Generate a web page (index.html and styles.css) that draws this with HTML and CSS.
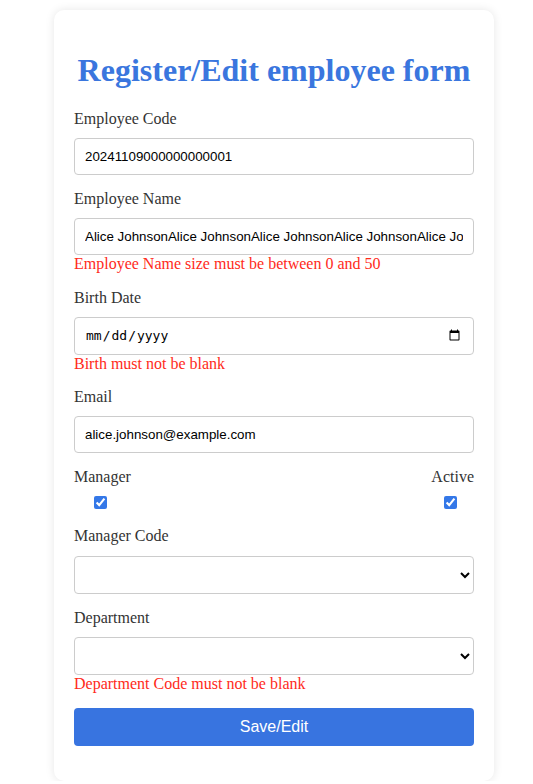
FILE: index.html
```html
<!DOCTYPE html>
<html>
<head>
<meta charset="utf-8">
<link rel="stylesheet" href="styles.css">
</head>
<body>
<div class="card">
  <h1 class="title">Register/Edit employee form</h1>
  <form class="form">
    <div class="group">
      <label class="label">Employee Code</label>
      <input class="field" type="text" value="20241109000000000001">
    </div>
    <div class="group">
      <label class="label">Employee Name</label>
      <input class="field" type="text" value="Alice JohnsonAlice JohnsonAlice JohnsonAlice JohnsonAlice Johnson">
      <div class="error">Employee Name size must be between 0 and 50</div>
    </div>
    <div class="group">
      <label class="label">Birth Date</label>
      <input class="field" type="date">
      <div class="error">Birth must not be blank</div>
    </div>
    <div class="group">
      <label class="label">Email</label>
      <input class="field" type="text" value="alice.johnson@example.com">
    </div>
    <div class="group checks">
      <div class="check">
        <label class="label">Manager</label>
        <input class="box" type="checkbox" checked>
      </div>
      <div class="check">
        <label class="label">Active</label>
        <input class="box" type="checkbox" checked>
      </div>
    </div>
    <div class="group">
      <label class="label">Manager Code</label>
      <select class="field"><option></option></select>
    </div>
    <div class="group">
      <label class="label">Department</label>
      <select class="field"><option></option></select>
      <div class="error">Department Code must not be blank</div>
    </div>
    <div class="group">
      <button class="btn" type="button">Save/Edit</button>
    </div>
  </form>
</div>
</body>
</html>
```

FILE: styles.css
```css
html, body {
  margin: 0;
  padding: 0;
  background: #ffffff;
}
body {
  font-family: "Liberation Serif", "Times New Roman", serif;
  font-size: 16px;
  color: #333333;
}
.card {
  width: 400px;
  margin: 10px 0 0 54px;
  padding: 20px;
  background: #ffffff;
  border-radius: 10px;
  box-shadow: 0 0 10px rgba(0, 0, 0, 0.1);
}
.title {
  margin: 22px 0 21px;
  font-size: 32px;
  font-weight: bold;
  color: #3a76de;
  text-align: center;
  line-height: 37px;
}
.form {
  margin: 0;
}
.group {
  margin-bottom: 15px;
}
.label {
  display: block;
  line-height: 18.2px;
  margin-bottom: 10px;
}
.field {
  display: block;
  box-sizing: border-box;
  width: 100%;
  padding: 10px;
  border: 1px solid #cccccc;
  border-radius: 4px;
  background: #ffffff;
  font-family: "Liberation Sans", Arial, sans-serif;
  font-size: 13.33px;
  color: #000000;
  height: 37px;
}
input[type="date"].field {
  height: 38px;
  font-family: "DejaVu Sans Mono", monospace;
  font-size: 13px;
}
select.field {
  height: 38px;
}
.error {
  color: #ff2a1a;
  line-height: 18.2px;
}
.checks {
  display: flex;
  justify-content: space-between;
}
.check {
  display: flex;
  flex-direction: column;
  align-items: center;
}
.check .label {
  margin-bottom: 10px;
}
.box {
  width: 13px;
  height: 13px;
  margin: 0 4px 3px 0;
  accent-color: #3478e8;
}
.btn {
  display: block;
  width: 100%;
  height: 38px;
  border: none;
  border-radius: 4px;
  background: #3874e0;
  color: #ffffff;
  font-family: "Liberation Sans", Arial, sans-serif;
  font-size: 16px;
}
```
